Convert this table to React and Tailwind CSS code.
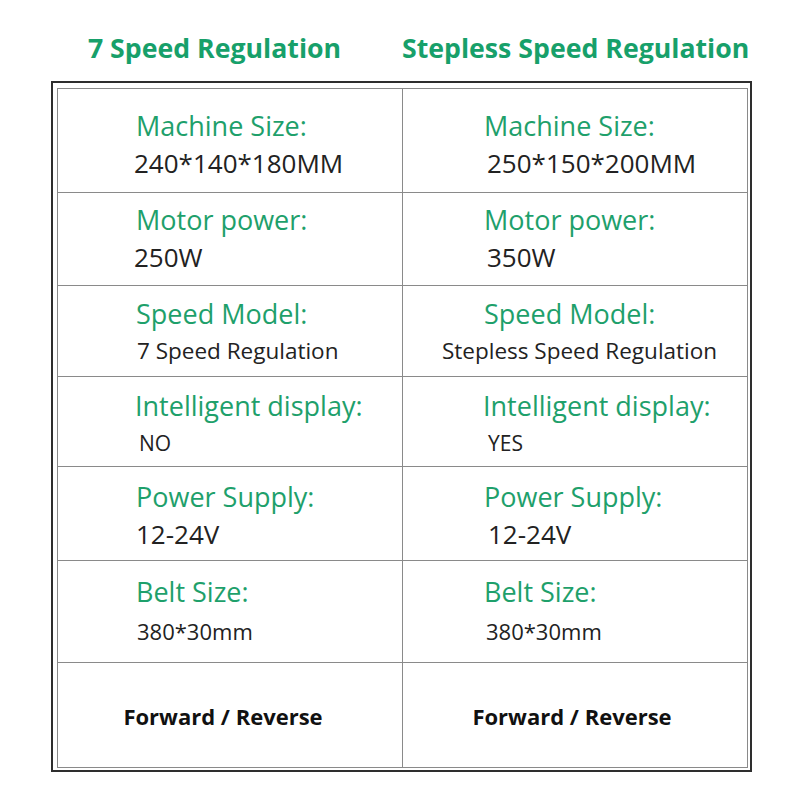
import React from "react";

/* ================= DATA ================= */

const rows = [
  {
    h: "h-[104px]",
    pt: "pt-[8px]",
    label: "Machine Size:",
    left: { text: "240*140*180MM", cls: "text-[26px] -ml-[2px]" },
    right: { text: "250*150*200MM", cls: "text-[26px] ml-[3px]" },
  },
  {
    h: "h-[93px]",
    pt: "pt-0",
    label: "Motor power:",
    left: { text: "250W", cls: "text-[26px] -ml-[2px]" },
    right: { text: "350W", cls: "text-[26px] ml-[3px]" },
  },
  {
    h: "h-[91px]",
    pt: "pt-[3px]",
    label: "Speed Model:",
    left: { text: "7 Speed Regulation", cls: "text-[22.5px] ml-[1px]" },
    right: { text: "Stepless Speed Regulation", cls: "text-[22.5px] -ml-[42px]" },
  },
  {
    h: "h-[90px]",
    pt: "pt-[6px]",
    label: "Intelligent display:",
    labelCls: "-ml-[1px]",
    left: { text: "NO", cls: "text-[21px] ml-[3px]" },
    right: { text: "YES", cls: "text-[21px] ml-[4px]" },
  },
  {
    h: "h-[94px]",
    pt: "pt-[4px]",
    label: "Power Supply:",
    left: { text: "12-24V", cls: "text-[26px] leading-[36px]" },
    right: { text: "12-24V", cls: "text-[26px] leading-[36px] ml-[4px]" },
  },
  {
    h: "h-[102px]",
    pt: "pt-[2px]",
    label: "Belt Size:",
    left: { text: "380*30mm", cls: "text-[22px] leading-[42px] ml-[1px]" },
    right: { text: "380*30mm", cls: "text-[22px] leading-[42px] ml-[2px]" },
  },
];

/* ================= CELL ================= */

function Cell({ label, labelCls = "", value, pad, pt }) {
  return (
    <div className={`flex flex-col justify-center ${pt} ${pad}`}>
      <div
        className={`text-[27px] leading-[36px] text-[#1ea06b] whitespace-nowrap ${labelCls}`}
      >
        {label}
      </div>
      <div
        className={`leading-[38px] text-[#222] whitespace-nowrap ${value.cls}`}
      >
        {value.text}
      </div>
    </div>
  );
}

/* ================= PAGE ================= */

export default function App() {
  return (
    <div
      className="w-[800px] h-[800px] bg-white"
      style={{ fontFamily: '"Open Sans", "Noto Sans", sans-serif' }}
    >
      {/* HEADERS */}
      <div className="h-[81px] flex pt-[30px] pl-[57px] font-bold text-[26.7px] leading-[36px] text-[#17a06a]">
        <div className="w-[345px] text-center pr-[30px] whitespace-nowrap">
          7 Speed Regulation
        </div>
        <div className="w-[345px] text-center whitespace-nowrap">
          Stepless Speed Regulation
        </div>
      </div>

      {/* TABLE */}
      <div className="ml-[51px] w-[701px] h-[691px] border-2 border-[#2e2e2e] pl-[4px] pt-[5px] pr-[2px] pb-[2px]">
        <div className="h-full border border-[#8a8a8a] flex flex-col">
          {rows.map((r) => (
            <div
              key={r.label}
              className={`flex border-b border-[#8a8a8a] ${r.h}`}
            >
              <div className="w-[345px] border-r border-[#8a8a8a] flex">
                <Cell
                  label={r.label}
                  labelCls={r.labelCls}
                  value={r.left}
                  pad="pl-[78px]"
                  pt={r.pt}
                />
              </div>
              <div className="flex-1 flex">
                <Cell
                  label={r.label}
                  labelCls={r.labelCls}
                  value={r.right}
                  pad="pl-[81px]"
                  pt={r.pt}
                />
              </div>
            </div>
          ))}

          {/* FORWARD / REVERSE */}
          <div className="flex-1 flex font-bold text-[22px] text-[#111]">
            <div className="w-[345px] border-r border-[#8a8a8a] flex items-center justify-center pr-[14px] pt-[3px]">
              Forward / Reverse
            </div>
            <div className="flex-1 flex items-center justify-center pr-[6px] pt-[3px]">
              Forward / Reverse
            </div>
          </div>
        </div>
      </div>
    </div>
  );
}
